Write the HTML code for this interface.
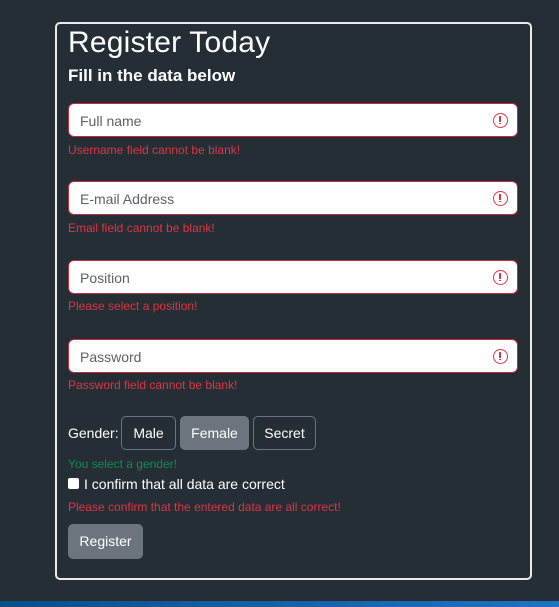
<!DOCTYPE html>
<html><head><style>
*{box-sizing:border-box;margin:0;padding:0}
body{width:559px;height:607px;background:#252e35;font-family:"Liberation Sans",sans-serif;position:relative;overflow:hidden;color:#fff}
.card{position:absolute;left:55px;top:22px;width:477px;height:558px;border:2px solid #e8eaec;border-radius:5px}
h1{position:absolute;left:68px;top:26px;font-size:30px;font-weight:normal;letter-spacing:0.2px}
h2{position:absolute;left:68px;top:66px;font-size:17px;font-weight:bold}
.inp{position:absolute;left:68px;width:450px;height:34px;background:#fff;border:1px solid #c22d3d;border-radius:6px;font-size:14px;color:#5a6168;padding:9px 11px}
.ic{position:absolute;right:9px;top:9px;width:15px;height:15px;border:1.8px solid #dc3545;border-radius:50%}
.ic:before{content:"";position:absolute;left:4.8px;top:2px;width:1.8px;height:5.5px;background:#dc3545}
.ic:after{content:"";position:absolute;left:4.8px;top:8.5px;width:1.8px;height:1.8px;background:#dc3545}
.err{position:absolute;left:68px;font-size:12px;color:#dc3545}
.btn{position:absolute;top:416px;height:34px;border:1px solid #6c757d;border-radius:5px;font-size:14px;color:#fff;text-align:center;line-height:32px}
</style></head><body>
<div class="card"></div>
<h1>Register Today</h1>
<h2>Fill in the data below</h2>
<div class="inp" style="top:103px">Full name<span class="ic"></span></div>
<div class="err" style="top:143px">Username field cannot be blank!</div>
<div class="inp" style="top:181px">E-mail Address<span class="ic"></span></div>
<div class="err" style="top:221px">Email field cannot be blank!</div>
<div class="inp" style="top:260px">Position<span class="ic"></span></div>
<div class="err" style="top:299px">Please select a position!</div>
<div class="inp" style="top:339px">Password<span class="ic"></span></div>
<div class="err" style="top:378px">Password field cannot be blank!</div>
<div style="position:absolute;left:68px;top:425px;font-size:14px">Gender:</div>
<div class="btn" style="left:121px;width:55px">Male</div>
<div class="btn" style="left:180px;width:69px;background:#6c757d">Female</div>
<div class="btn" style="left:253px;width:63px">Secret</div>
<div class="err" style="top:457px;color:#198754">You select a gender!</div>
<div style="position:absolute;left:68px;top:478px;width:11px;height:11px;background:#fff;border-radius:2px"></div>
<div style="position:absolute;left:84px;top:476px;font-size:14px">I confirm that all data are correct</div>
<div class="err" style="top:500px">Please confirm that the entered data are all correct!</div>
<div style="position:absolute;left:68px;top:524px;width:75px;height:35px;background:#6c757d;border-radius:5px;font-size:14px;line-height:35px;text-align:center">Register</div>
<div style="position:absolute;left:0;top:601px;width:559px;height:6px;background:linear-gradient(90deg,#0a4f8c,#1f73c4)"></div>
</body></html>
